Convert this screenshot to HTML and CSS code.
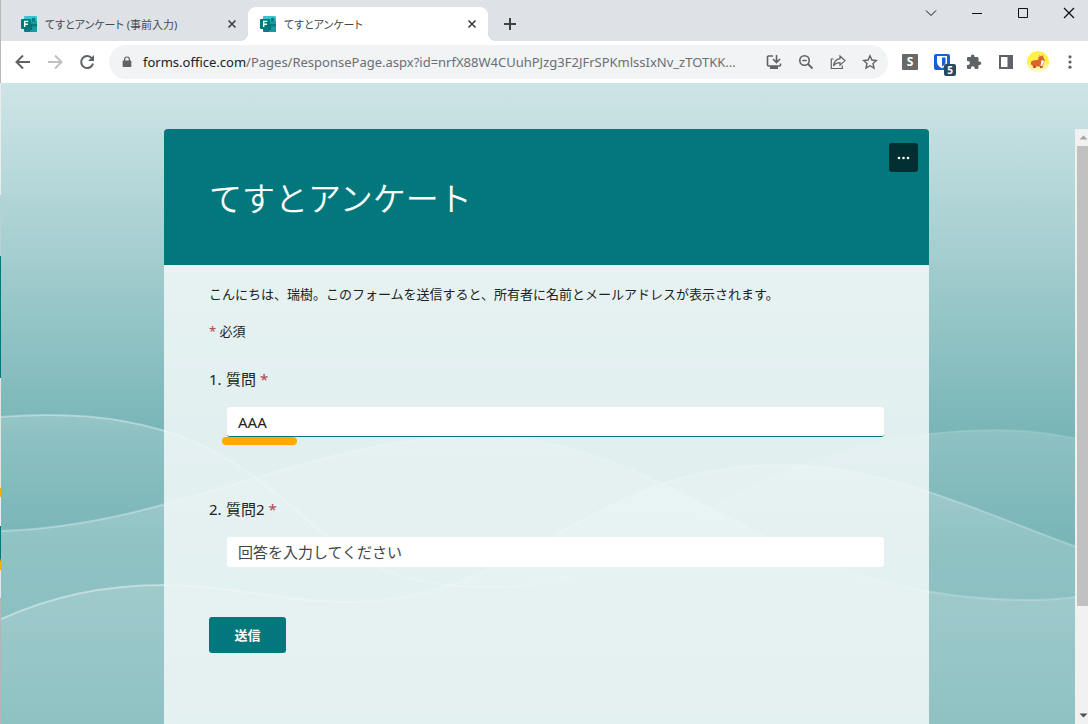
FILE: index.html
```html
<!DOCTYPE html>
<html lang="ja">

<head>
  <meta charset="UTF-8">
  <title>てすとアンケート</title>
  <link rel="stylesheet" href="styles.css">
</head>

<body>
  <svg class="symbols" aria-hidden="true">
    <symbol id="forms-logo" viewBox="0 0 16 16">
      <path fill="#37c6d0" d="M4 0h11a1 1 0 0 1 1 1v7H3V1a1 1 0 0 1 1-1z" />
      <path fill="#1a9ba1" d="M9 5h7v5.500H9z" />
      <path fill="#0a7a80" d="M3 8h13v7a1 1 0 0 1-1 1H4a1 1 0 0 1-1-1z" />
      <circle cx="12.500" cy="3.800" r="2" fill="#0a7a80" />
      <path fill="#1a9ba1" d="M9 10.500h7V15a1 1 0 0 1-1 1H9z" />
      <path fill="#0a6a70" d="M9 8h2v6H9z" />
      <rect y="3" width="10" height="10" rx="1" fill="#03787c" />
      <path fill="none" stroke="#fff" stroke-width="1.400" d="M3.700 11V5.400h3.600M3.700 8.200H7" />
    </symbol>
    <symbol id="close" viewBox="0 0 16 16">
      <path fill="none" stroke="#3c4043" stroke-width="1.600" d="M4.500 4.500l7 7M11.500 4.500l-7 7" />
    </symbol>
  </svg>

  <div class="behind"></div>

  <div class="window">
    <header class="tabs">
      <div class="tab">
        <svg class="tab-logo"><use href="#forms-logo" /></svg>
        <span class="tab-title">てすとアンケート (事前入力)</span>
        <button class="tab-close" aria-label="閉じる"><svg><use href="#close" /></svg></button>
      </div>
      <div class="tab valgt">
        <svg class="tab-logo"><use href="#forms-logo" /></svg>
        <span class="tab-title">てすとアンケート</span>
        <button class="tab-close" aria-label="閉じる"><svg><use href="#close" /></svg></button>
      </div>
      <button class="new-tab" aria-label="新しいタブ">
        <svg viewBox="0 0 16 16"><path fill="none" stroke="#3c4043" stroke-width="2" d="M8 2v12M2 8h12" /></svg>
      </button>
      <div class="controls">
        <button aria-label="タブを検索"><svg viewBox="0 0 16 16"><path d="M3 5.500l5 5 5-5" /></svg></button>
        <button aria-label="最小化"><svg viewBox="0 0 16 16"><path d="M3 8.500h10" /></svg></button>
        <button aria-label="最大化"><svg viewBox="0 0 16 16"><path d="M3.500 3.500h9v9h-9z" /></svg></button>
        <button aria-label="閉じる"><svg viewBox="0 0 16 16"><path stroke-width="1.300" d="M3 3l10 10M13 3L3 13" /></svg></button>
      </div>
    </header>

    <nav class="toolbar">
      <button class="icon" aria-label="戻る">
        <svg viewBox="0 0 16 16"><path class="line" stroke-width="2" d="M15 8H2M8 1.500L1.500 8 8 14.500" /></svg>
      </button>
      <button class="icon faded" aria-label="進む">
        <svg viewBox="0 0 16 16"><path class="line" stroke-width="2" d="M1 8h13M8 1.500L14.500 8 8 14.500" /></svg>
      </button>
      <button class="icon" aria-label="再読み込み">
        <svg viewBox="0 0 16 16"><path class="line" stroke-width="2" d="M13 4.500A6 6 0 1 0 14 9.500" /><path d="M15 1v6H9z" /></svg>
      </button>

      <div class="address">
        <svg class="lock" viewBox="0 0 16 16"><path d="M3 6h10a.8.8 0 0 1 .8.800v7a1 1 0 0 1-1 1H3.200a1 1 0 0 1-1-1v-7A.8.800 0 0 1 3 6z" /><path class="line" stroke-width="1.600" d="M4.800 7V4.500a3.200 3.200 0 0 1 6.400 0V7" /></svg>
        <p class="url"><span>forms.office.com</span>/Pages/ResponsePage.aspx?id=nrfX88W4CUuhPJzg3F2JFrSPKmlssIxNv_zTOTKK...</p>
        <button class="icon" aria-label="インストール">
          <svg viewBox="0 0 16 16"><path class="line" stroke-width="1.600" d="M7 2H2.500a1 1 0 0 0-1 1v8a1 1 0 0 0 1 1h11a1 1 0 0 0 1-1V9.500M10.500 1v7M7 5l3.500 3.500L14 5" /><path d="M4 12h8v3H4z" /></svg>
        </button>
        <button class="icon" aria-label="ズーム">
          <svg viewBox="0 0 16 16"><circle class="line" stroke-width="1.600" cx="6.500" cy="6.500" r="4.700" /><path class="line" stroke-width="1.800" d="M10 10l4.500 4.500" /><path class="line" stroke-width="1.400" d="M4.200 6.500h4.600" /></svg>
        </button>
        <button class="icon" aria-label="共有">
          <svg viewBox="0 0 16 16"><path class="line" stroke-width="1.200" d="M3.500 5H1.300v9.500h11V11.500M10 2l5 4.600-5 4.600V8.600C7 8.600 5 9.500 3.500 12 4 8 6 5.200 10 4.700z" /></svg>
        </button>
        <button class="icon" aria-label="ブックマーク">
          <svg viewBox="0 0 16 16"><path class="line" stroke-width="1.400" d="M8 1.800l1.900 4.200 4.500.500-3.400 3 1 4.500L8 11.700 4 14l1-4.500-3.400-3 4.500-.500z" /></svg>
        </button>
      </div>

      <button class="icon extension first"><span class="ext-s">S</span></button>
      <button class="icon extension" aria-label="Bitwarden">
        <svg viewBox="0 0 16 16"><rect width="16" height="16" rx="2" fill="#175ddc" /><path fill="#fff" d="M3 2h10v6.500c0 2.500-2.500 4.500-5 5.800-2.500-1.300-5-3.300-5-5.800z" /><path fill="#175ddc" d="M8 3.500h3.500v5c0 1.700-1.600 3-3.500 4.100z" /></svg>
        <span class="badge">5</span>
      </button>
      <button class="icon" aria-label="拡張機能">
        <svg viewBox="0 0 16 16"><path d="M13.500 7.500h-1V4.300A1.300 1.300 0 0 0 11.200 3H8.500V2.300a1.800 1.800 0 0 0-3.600 0V3H2.300A1.300 1.300 0 0 0 1 4.300v2.600h.9a2 2 0 0 1 0 4H1v2.800A1.300 1.300 0 0 0 2.300 15h2.600v-.900a1.900 1.900 0 0 1 3.800 0v.900h2.500a1.300 1.300 0 0 0 1.300-1.300v-2.600h1a1.800 1.800 0 0 0 0-3.600z" /></svg>
      </button>
      <button class="icon" aria-label="サイドパネル">
        <svg viewBox="0 0 16 16"><path fill-rule="evenodd" d="M1 1h14v14H1zM3 3v10h6.500V3z" /></svg>
      </button>
      <button class="icon avatar" aria-label="プロフィール">
        <svg viewBox="0 0 22 22"><defs><linearGradient id="sun" x2="0" y2="1"><stop offset=".500" stop-color="#fff04e" /><stop offset="1" stop-color="#fffdf0" /></linearGradient></defs><circle cx="11" cy="11" r="11" fill="url(#sun)" /><path fill="#d9642c" d="M4 11c1-1.500 3-2 5-1.800l2.500-.700-.500-2 1.500-.500-.300-2 2 1.500 1.800-1.500.500 3 1.500 2.500-1 1.500-1 4-.500 2h-2l-.300-1.500H9L8.500 17h-2l-.500-2-2-1.500z" /><path fill="#fff" d="M14.500 9l3 1-1 1.500-1.300 3.500H13.500z" /><path fill="#b8472a" d="M6.500 15h1.800v2H6.500zM13 15.500h1.800V17H13z" /></svg>
      </button>
      <button class="icon menu" aria-label="メニュー">
        <svg viewBox="0 0 16 16"><circle cx="8" cy="2.800" r="1.600" /><circle cx="8" cy="8" r="1.600" /><circle cx="8" cy="13.200" r="1.600" /></svg>
      </button>
    </nav>

    <main class="page">
      <svg class="waves" viewBox="0 0 1088 641" preserveAspectRatio="none" aria-hidden="true">
        <defs>
          <linearGradient id="fade-a" gradientUnits="userSpaceOnUse" x1="0" y1="333" x2="0" y2="460">
            <stop offset="0" stop-color="#fff" stop-opacity=".19" />
            <stop offset="1" stop-color="#fff" stop-opacity="0" />
          </linearGradient>
          <linearGradient id="fade-b" gradientUnits="userSpaceOnUse" x1="0" y1="360" x2="0" y2="641">
            <stop offset="0" stop-color="#fff" stop-opacity=".24" />
            <stop offset=".560" stop-color="#fff" stop-opacity=".15" />
            <stop offset="1" stop-color="#fff" stop-opacity=".09" />
          </linearGradient>
        </defs>
        <g fill="url(#fade-a)">
          <path d="M0 334C200 318 260 402 330 456C390 502 450 505 503 504C660 500 740 347 997 347Q1040 347 1088 358V641H0z" />
        </g>
        <g fill="url(#fade-b)">
          <path d="M0 448C180 442 310 353 478 353C680 353 760 517 1030 517Q1060 517 1088 512V641H0z" />
          <path d="M0 536C50 514 100 502 163 502C230 502 280 519 349 519C520 519 590 382 777 382C890 382 980 430 1088 468V641H0z" />
        </g>
        <g fill="none" stroke="#fff" stroke-width="2">
          <path stroke-opacity=".35" d="M0 334C200 318 260 402 330 456C390 502 450 505 503 504" />
          <path stroke-opacity=".12" d="M503 504C660 500 740 347 997 347Q1040 347 1088 358" />
          <path stroke-opacity=".3" d="M0 448C180 442 310 353 478 353" />
          <path stroke-opacity=".2" d="M478 353C680 353 760 517 1030 517Q1060 517 1088 512" />
          <path stroke-opacity=".4" d="M0 536C50 514 100 502 163 502C230 502 280 519 349 519" />
          <path stroke-opacity=".25" d="M349 519C520 519 590 382 777 382C890 382 980 430 1088 468" />
        </g>
      </svg>

      <div class="scroll">
        <form class="card">
          <div class="card-head">
            <h1>てすとアンケート</h1>
            <button type="button" class="more" aria-label="その他">
              <svg viewBox="0 0 13 13"><circle cx="2" cy="7" r="1.300" /><circle cx="6.500" cy="7" r="1.300" /><circle cx="11" cy="7" r="1.300" /></svg>
            </button>
          </div>
          <div class="card-body">
            <p>こんにちは、瑞樹。このフォームを送信すると、所有者に名前とメールアドレスが表示されます。</p>
            <p><span class="star">*</span> 必須</p>
            <div class="question">
              <label for="q1"><span class="nr">1.</span>質問 <span class="star">*</span></label>
              <div class="answer">
                <input id="q1" class="active" type="text" value="AAA">
                <span class="marker"></span>
              </div>
            </div>
            <div class="question">
              <label for="q2"><span class="nr">2.</span>質問2 <span class="star">*</span></label>
              <div class="answer">
                <input id="q2" type="text" placeholder="回答を入力してください">
              </div>
            </div>
            <button type="button" class="send">送信</button>
          </div>
        </form>
      </div>

      <div class="scrollbar">
        <svg class="arrow up" viewBox="0 0 17 17"><path d="M4.500 10.500l4-4 4 4z" /></svg>
        <div class="track"><div class="thumb"></div></div>
        <svg class="arrow" viewBox="0 0 17 17"><path d="M4.500 6.500l4 4 4-4z" /></svg>
      </div>
    </main>
  </div>
</body>

</html>
```
FILE: styles.css
```css
* {
  box-sizing: border-box;
}

body {
  margin: 0;
  height: 100vh;
  display: flex;
  overflow: hidden;
  font-family: "Noto Sans", "Noto Sans CJK JP", sans-serif;
  color: #212121;
}

h1,
p {
  margin: 0;
}

button {
  margin: 0;
  padding: 0;
  border: 0;
  background: none;
  font: inherit;
}

svg {
  display: block;
}

.symbols {
  position: absolute;
  width: 0;
  height: 0;
}

/* edge of the window behind */
.behind {
  width: 1px;
  background: linear-gradient(#b8b8b8 83px, #ececec 83px 195px, #b5d3d5 195px 256px, #03787c 256px 378px, #e4e6dc 378px 488px, #ffaa00 488px 497px, #e8eeee 497px 526px, #03787c 526px 558px, #ffaa00 562px 570px, #e6e6e6 570px 598px, #b9b4b4 598px);
}

.window {
  flex: 1;
  min-width: 0;
  display: flex;
  flex-direction: column;
}

/* tabs */
.tabs {
  height: 41px;
  padding-left: 8px;
  display: flex;
  align-items: flex-end;
  background: #dee1e6;
}

.tab {
  flex: 0 1 239px;
  height: 34px;
  padding: 0 8px 0 12px;
  display: flex;
  align-items: center;
  gap: 8px;
  font-size: 11px;
  font-feature-settings: "palt";
  color: #45494d;
}

.tab.valgt {
  flex-basis: 240px;
  position: relative;
  background: #fff;
  border-radius: 8px 8px 0 0;
}

.tab.valgt::before,
.tab.valgt::after {
  content: "";
  position: absolute;
  bottom: 0;
  width: 8px;
  height: 8px;
}

.tab.valgt::before {
  right: 100%;
  background: radial-gradient(circle at 0 0, #dee1e6 8px, #fff 8px);
}

.tab.valgt::after {
  left: 100%;
  background: radial-gradient(circle at 100% 0, #dee1e6 8px, #fff 8px);
}

.tab-logo {
  width: 16px;
  height: 16px;
}

.tab-title {
  flex: 1;
  white-space: nowrap;
}

.tab-close svg {
  width: 16px;
  height: 16px;
}

.new-tab {
  height: 34px;
  padding: 0 14px;
}

.new-tab svg {
  width: 16px;
  height: 16px;
}

.controls {
  display: flex;
  align-self: flex-start;
  margin-left: auto;
  margin-right: -4px;
}

.controls button {
  width: 46px;
  height: 26px;
  display: flex;
  align-items: center;
  justify-content: center;
}

.controls svg {
  width: 16px;
  height: 16px;
  fill: none;
  stroke: #111;
}

/* toolbar */
.toolbar {
  height: 42px;
  padding-left: 6px;
  display: flex;
  align-items: center;
  background: #fff;
}

.icon {
  flex: none;
  position: relative;
  width: 32px;
  height: 32px;
  display: flex;
  align-items: center;
  justify-content: center;
}

.icon svg,
.lock {
  width: 16px;
  height: 16px;
  fill: #5f6368;
}

.icon .line,
.lock .line {
  fill: none;
  stroke: #5f6368;
}

.faded {
  opacity: 0.4;
}

.address {
  flex: 1;
  min-width: 0;
  height: 34px;
  margin-left: 6px;
  padding: 0 2px 0 12px;
  display: flex;
  align-items: center;
  background: #f1f3f4;
  border-radius: 17px;
}

.address .lock {
  flex: none;
  width: 12px;
  height: 14px;
}

.url {
  flex: 1;
  min-width: 0;
  padding-left: 10px;
  font-size: 13px;
  white-space: nowrap;
  overflow: hidden;
  color: #6b6f73;
}

.url span {
  color: #202124;
}

.extension.first {
  margin-left: 6px;
}

.ext-s {
  width: 16px;
  height: 16px;
  border-radius: 1px;
  background: #686868;
  color: #fff;
  font-size: 12px;
  font-weight: bold;
  line-height: 16px;
}

.badge {
  position: absolute;
  right: 2px;
  bottom: 2px;
  width: 12px;
  height: 12px;
  border-radius: 2px;
  background: #274b5f;
  color: #fff;
  font-size: 10px;
  font-weight: bold;
  line-height: 12px;
}

.avatar svg {
  width: 22px;
  height: 22px;
}

.menu {
  margin-right: 2px;
}

/* page */
.page {
  flex: 1;
  min-height: 0;
  position: relative;
  display: flex;
  padding-top: 46px;
  background: linear-gradient(#cee5e6, #78b5b7 352px);
}

.waves {
  position: absolute;
  top: 0;
  left: 0;
  width: 100%;
  height: 100%;
}

.scroll {
  flex: 1;
  min-width: 0;
  position: relative;
  display: flex;
  justify-content: center;
  padding-left: 17px;
}

.card {
  flex: 0 1 765px;
  display: flex;
  flex-direction: column;
  border-radius: 4px 4px 0 0;
  overflow: hidden;
}

.card-head {
  min-height: 136px;
  padding: 14px 11px 14px 45px;
  display: flex;
  align-items: flex-start;
  justify-content: space-between;
  background: #03787c;
}

h1 {
  align-self: center;
  font-family: "Noto Sans CJK JP", sans-serif;
  font-size: 33px;
  font-weight: 350;
  line-height: 48px;
  color: #fff;
}

.more {
  width: 29px;
  height: 29px;
  display: flex;
  align-items: center;
  justify-content: center;
  border-radius: 3px;
  background: #002f32;
}

.more svg {
  width: 13px;
  height: 13px;
  fill: #fff;
}

.card-body {
  flex: 1;
  padding: 19px 45px;
  background: rgba(240, 247, 247, 0.88);
  font-size: 13px;
  line-height: 20px;
}

.card-body p {
  margin-bottom: 17px;
}

.star {
  color: #b3414b;
}

.question {
  margin-top: 28px;
  margin-bottom: 62px;
  font-size: 15px;
}

.question + .question {
  margin-bottom: 50px;
}

.question label {
  display: flex;
  gap: 4px;
}

.nr {
  width: 13px;
}

.answer {
  position: relative;
  margin: 18px 0 0 18px;
}

input {
  display: block;
  width: 100%;
  height: 30px;
  padding: 0 11px;
  border: 0;
  border-radius: 3px;
  background: #fff;
  font: inherit;
  color: #212121;
}

input.active {
  border-bottom: 1px solid #03787c;
}

input::placeholder {
  color: #444;
}

/* highlighter under the first answer */
.marker {
  position: absolute;
  top: 100%;
  left: -5px;
  width: 75px;
  height: 8px;
  border-radius: 4px;
  background: #ffaa00;
}

.send {
  width: 77px;
  height: 36px;
  border-radius: 3px;
  background: #03787c;
  color: #fff;
  font-weight: bold;
}

/* scrollbar */
.scrollbar {
  position: relative;
  width: 13px;
  display: flex;
  flex-direction: column;
  overflow: hidden;
  background: #f1f1f1;
}

.arrow {
  width: 17px;
  height: 17px;
  fill: #505050;
}

.arrow.up {
  fill: #a3a3a3;
}

.track {
  flex: 1;
  padding-left: 2px;
}

.thumb {
  height: 82%;
  background: #c1c1c1;
}
```
